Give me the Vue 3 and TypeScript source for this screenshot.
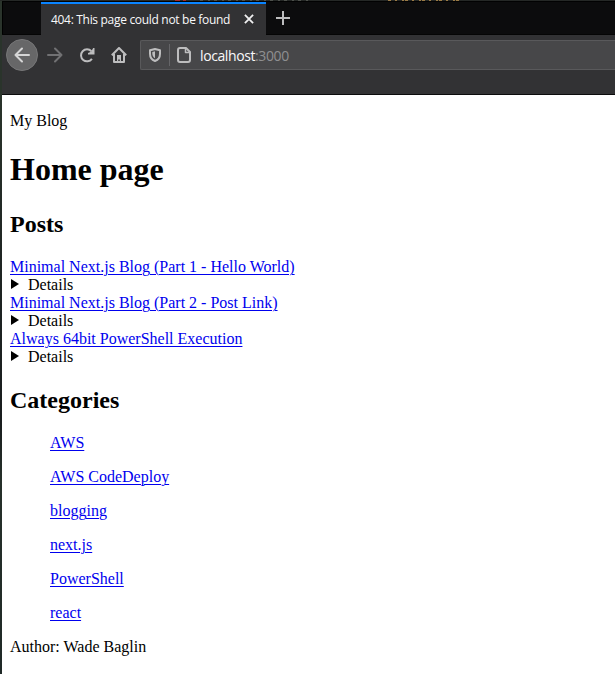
<script setup lang="ts">
interface Link {
  label: string
  slug: string
}

const posts: Link[] = [
  { label: 'Minimal Next.js Blog (Part 1 - Hello World)', slug: 'part-1' },
  { label: 'Minimal Next.js Blog (Part 2 - Post Link)', slug: 'part-2' },
  { label: 'Always 64bit PowerShell Execution', slug: 'powershell-64bit' },
]

const categories: Link[] = [
  { label: 'AWS', slug: 'aws' },
  { label: 'AWS CodeDeploy', slug: 'aws-codedeploy' },
  { label: 'blogging', slug: 'blogging' },
  { label: 'next.js', slug: 'nextjs' },
  { label: 'PowerShell', slug: 'powershell' },
  { label: 'react', slug: 'react' },
]
</script>

<template>
  <div class="desktop">
    <svg class="backdrop-edge" width="615" height="1" viewBox="0 0 615 1">
      <path d="M200 .5H310" stroke="#4d504b" stroke-dasharray="3 5 2 4" />
      <path d="M175 .5h5m3 0h3" stroke="#a5282c" />
      <path d="M388 .5H463" stroke="#9b7b46" stroke-dasharray="3 4 2 5 2 1" />
    </svg>
    <div class="window">
      <div class="tabs">
        <div class="tab">
          <span class="tab-title">404: This page could not be found</span>
          <svg class="close" width="10" height="10" viewBox="0 0 10 10">
            <path d="M.9.9l8.2 8.2M9.1.9L.9 9.1" />
          </svg>
        </div>
        <svg class="plus" width="14" height="14" viewBox="0 0 14 14">
          <path d="M7 0v14M0 7h14" />
        </svg>
      </div>

      <div class="toolbar">
        <button class="back" aria-label="Back">
          <svg width="16" height="16" viewBox="0 0 16 16">
            <path d="M15 8H1.5M8 1.5L1.5 8 8 14.5" />
          </svg>
        </button>
        <svg class="icon forward" width="16" height="16" viewBox="0 0 16 16">
          <path d="M1 8h13.5M8 1.5L14.5 8 8 14.5" />
        </svg>
        <svg class="icon reload" width="16" height="16" viewBox="0 0 16 16">
          <path d="M12.9 11.8A6 6 0 1 1 12.4 4.200" />
          <path class="solid" d="M15.500 1v6.500H9V6l3-1.200L14.200 1z" />
        </svg>
        <svg class="icon home" width="16" height="16" viewBox="0 0 16 16">
          <path d="M.8 8.2L8 1l7.2 7.2M3 7v8h10V7" />
          <path class="solid" d="M6 8h4v7H8.8v-2.5H7.2V15H6z" />
        </svg>
        <div class="address">
          <svg class="icon shield" width="12" height="14" viewBox="0 0 12 14">
            <path d="M6 1l5 1.3v3.4c0 3.7-2 6.2-5 7.3-3-1.1-5-3.6-5-7.3V2.3z" />
            <path class="solid" d="M6 3.3v7C4.3 9.3 3.3 7.5 3.3 5.4V4z" />
          </svg>
          <span class="divider"></span>
          <svg class="icon page-icon" width="14" height="16" viewBox="0 0 14 16">
            <path d="M3 1h6l4 4v8a2 2 0 0 1-2 2H3a2 2 0 0 1-2-2V3a2 2 0 0 1 2-2z" />
            <path class="fold" d="M8.5 1v4.5H13" />
          </svg>
          <span class="url">localhost<span class="port">:3000</span></span>
        </div>
      </div>

      <main class="page">
        <header>My Blog</header>
        <h1>Home page</h1>
        <h2>Posts</h2>
        <section v-for="post in posts" :key="post.slug" class="post">
          <a :href="'#' + post.slug">{{ post.label }}</a>
          <div class="summary">
            <svg width="8" height="10" viewBox="0 0 8 10"><path d="M0 0l8 5-8 5z" /></svg>
            <span>Details</span>
          </div>
        </section>
        <h2 class="categories-title">Categories</h2>
        <ul>
          <li v-for="category in categories" :key="category.slug">
            <a :href="'#' + category.slug">{{ category.label }}</a>
          </li>
        </ul>
        <footer>Author: Wade Baglin</footer>
      </main>
    </div>
  </div>
</template>

<style>
body {
  margin: 0;
}
</style>

<style scoped>
.desktop {
  box-sizing: border-box;
  width: 615px;
  height: 674px;
  padding-left: 2px;
  overflow: hidden;
  background: linear-gradient(#2a342b 0, #2a342b 94px, #202624 250px, #191d1e 420px, #26302a 480px, #1f2927 674px);
}
.backdrop-edge {
  display: block;
  margin-left: -2px;
  background: #252826;
}
.window {
  display: flex;
  flex-direction: column;
  height: 673px;
  background: #fff;
}
.tabs {
  box-sizing: border-box;
  display: flex;
  height: 34px;
  padding-left: 39px;
  background: #0c0c0d;
  border-top: 1px solid #020202;
  border-bottom: 1px solid #050505;
  box-shadow: inset 1px 0 #000;
}
.tab {
  box-sizing: border-box;
  display: flex;
  align-items: center;
  width: 225px;
  height: 33px;
  padding: 0 12px 0 10px;
  background: #323234;
  border-top: 2px solid #0a84ff;
}
.tab-title {
  flex: 1;
  padding-top: 1px;
  font: 12px/16px "Open Sans", "Noto Sans", sans-serif;
  letter-spacing: -0.31px;
  white-space: nowrap;
  color: #f9f9fa;
}
svg {
  flex: none;
  fill: none;
}
.close {
  margin-bottom: 1px;
  stroke: #f0f0f1;
  stroke-width: 1.8;
}
.plus {
  margin: 9px 0 0 10px;
  stroke: #bdbdbe;
  stroke-width: 2;
}
.toolbar {
  box-sizing: border-box;
  display: flex;
  align-items: flex-start;
  height: 60px;
  padding: 4px 0 0 4px;
  background: #323234;
  border-bottom: 1px solid #0c0c0d;
}
.back {
  display: flex;
  align-items: center;
  justify-content: center;
  box-sizing: border-box;
  width: 32px;
  height: 32px;
  padding: 0;
  border: 1px solid #777778;
  border-radius: 50%;
  background: #676768;
}
.back svg {
  stroke: #d6d6d6;
  stroke-width: 2;
  stroke-linecap: round;
  stroke-linejoin: round;
}
.icon {
  stroke: #bdbdbe;
  stroke-width: 2;
  stroke-linejoin: round;
}
.solid {
  fill: #bdbdbe;
  stroke: none;
}
.forward {
  margin: 8px 0 0 9px;
  stroke: #717173;
  stroke-linecap: round;
}
.reload {
  margin: 8px 0 0 16px;
}
.home {
  margin: 8px 0 0 16px;
}
.address {
  box-sizing: border-box;
  display: flex;
  flex: 1;
  align-items: center;
  height: 30px;
  margin: 1px 0 0 13px;
  padding-left: 8px;
  background: #474749;
  border: 1px solid #59595b;
  border-right: 0;
  border-radius: 2px 0 0 2px;
}
.divider {
  width: 1px;
  height: 22px;
  margin: 0 7px 0 8px;
  background: #656568;
}
.fold {
  stroke-width: 1.5;
}
.url {
  margin-left: 9px;
  padding-top: 2px;
  font: 14px/20px "Open Sans", "Noto Sans", sans-serif;
  letter-spacing: -0.4px;
  color: #f9f9fa;
}
.port {
  color: #8f8f91;
}
.page {
  flex: 1;
  padding: 17px 8px 0;
  font: 16px/18px "Liberation Serif", "Times New Roman", serif;
  color: #000;
}
h1 {
  margin: 21px 0;
  font-size: 32px;
  line-height: 37px;
}
h2 {
  margin: 0 0 19px;
  font-size: 24px;
  line-height: 30px;
}
a {
  color: #00e;
  text-decoration: underline;
  text-decoration-thickness: 1px;
  text-underline-offset: 2px;
}
.post > a {
  display: inline-block;
}
.summary {
  display: flex;
  height: 18px;
}
.summary svg {
  margin: 3px 9px 0 1px;
  fill: #000;
}
.categories-title {
  margin: 19px 0;
}
ul {
  display: flex;
  flex-direction: column;
  gap: 16px;
  margin: 0;
  padding: 0 0 0 40px;
  list-style: none;
}
footer {
  margin-top: 16px;
}
</style>
